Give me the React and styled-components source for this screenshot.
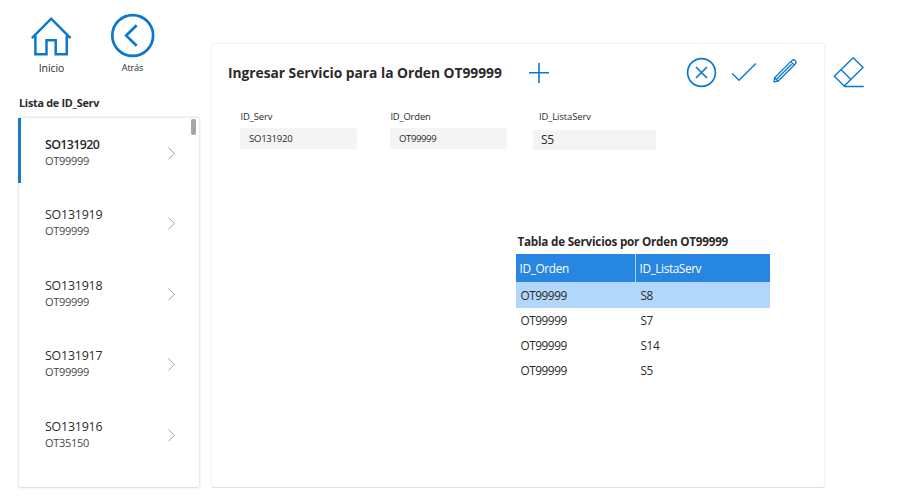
import React from "react";
import styled, { createGlobalStyle } from "styled-components";

const BLUE = "#0a78d0";

const GlobalStyle = createGlobalStyle`
  * { box-sizing: border-box; }
  body { margin: 0; background: #fff; }
`;

const Page = styled.div`
  display: flex;
  width: 912px;
  height: 500px;
  overflow: hidden;
  background: #fff;
  color: #2b2a29;
  font-family: "Open Sans", "Noto Sans", sans-serif;
`;

const Text = styled.span`
  display: block;
  white-space: nowrap;
  font-size: ${(p) => p.$size}px;
  line-height: ${(p) => p.$line || 16}px;
  font-weight: ${(p) => p.$weight || 400};
  letter-spacing: ${(p) => p.$track || 0}px;
  color: ${(p) => p.$color || "inherit"};
`;

const Sidebar = styled.aside`
  display: flex;
  flex-direction: column;
  width: 182px;
  margin-left: 18px;
`;

const Nav = styled.nav`
  display: flex;
  gap: 37px;
  height: 95px;
  padding: 13px 0 0 11px;
`;

const NavButton = styled.a`
  display: flex;
  flex-direction: column;
  align-items: center;
  width: 44px;
  padding-left: 1px;
  svg { display: block; height: 47px; overflow: visible; }
`;

const ListTitle = styled.h2`
  height: 22px;
  margin: 0;
  padding-left: 1px;
`;

const ListCard = styled.div`
  display: flex;
  height: 371px;
  border: 1px solid #ebebeb;
  border-bottom-color: #dedede;
  border-radius: 3px;
  box-shadow: 0 0 2px rgba(0, 0, 0, 0.14);
`;

const List = styled.ul`
  display: flex;
  flex-direction: column;
  flex: 1;
  gap: 5.4px;
  margin: 0 0 0 -1px;
  padding: 0;
  list-style: none;
`;

const ListRow = styled.li`
  display: flex;
  align-items: center;
  justify-content: space-between;
  height: 65px;
  padding: 5px 16px 0 ${(p) => (p.$selected ? 24 : 27)}px;
  border-left: ${(p) => (p.$selected ? "3px solid #1a7acb" : "0")};
  svg { display: block; }
`;

const RowText = styled.div`
  display: flex;
  flex-direction: column;
`;

const ScrollThumb = styled.div`
  width: 5px;
  height: 16px;
  margin: 1px 3px 0 0;
  border-radius: 2px;
  background: #a6a6a6;
`;

const Panel = styled.main`
  display: flex;
  flex-direction: column;
  width: 614px;
  height: 445px;
  margin: 43px 0 0 11px;
  border: 1px solid #f3f3f3;
  border-bottom-color: #dedede;
  border-radius: 3px;
  box-shadow: 0 0 1px rgba(0, 0, 0, 0.08);
`;

const PanelHeader = styled.header`
  display: flex;
  align-items: center;
  height: 57px;
  padding: 0 26px 0 16px;
`;

const TitleBox = styled.h1`
  width: 301px;
  margin: 0;
`;

const Actions = styled.div`
  display: flex;
  gap: 15px;
  margin-left: auto;
`;

const IconButton = styled.button`
  padding: 0;
  border: 0;
  background: none;
  svg { display: block; overflow: visible; }
`;

const Form = styled.div`
  display: flex;
  height: 130px;
  padding: 8px 0 0 28px;
`;

const Field = styled.div`
  width: ${(p) => p.$width}px;
`;

const FieldLabel = styled.label`
  display: block;
  height: ${(p) => (p.$wide ? 21 : 19)}px;
  padding-left: ${(p) => (p.$wide ? 6 : 0.4)}px;
`;

const Input = styled.div`
  display: flex;
  align-items: center;
  width: ${(p) => (p.$wide ? 123 : 117)}px;
  height: ${(p) => (p.$wide ? 20 : 21)}px;
  padding-left: ${(p) => (p.$wide ? 8 : 9)}px;
  border-radius: ${(p) => (p.$wide ? 0 : 2)}px;
  background: #f4f4f4;
`;

const TableSection = styled.section`
  width: 254px;
  margin-left: 304px;
`;

const Caption = styled.h2`
  height: 23px;
  margin: 0;
  padding: 2px 0 0 1.5px;
`;

const TableRow = styled.div`
  display: grid;
  grid-template-columns: 120px 134px;
  align-items: stretch;
  height: ${(p) => p.$height || 25}px;
  background: ${(p) => p.$bg || "transparent"};
`;

const Cell = styled.div`
  display: flex;
  align-items: center;
  padding-left: ${(p) => (p.$head ? 3.5 : 4.5)}px;
  padding-bottom: ${(p) => (p.$raised ? 1 : 0)}px;
  border-right: ${(p) => (p.$divider ? "1px solid #a9d0f5" : "0")};
`;

const EraserButton = styled(IconButton)`
  width: 32px;
  height: 32px;
  margin: 57px 0 0 8px;
`;

const HomeIcon = () => (
  <svg width="44" height="47" viewBox="0 0 44 47" fill="none" stroke={BLUE} strokeWidth="2.5">
    <path d="M1.9 25.2 21.2 5.7 40.5 25.2" />
    <path d="M5.4 22.5v18.8h11.1V27.3h9.2v14h11.1V22.5" />
  </svg>
);

const BackIcon = () => (
  <svg width="44" height="47" viewBox="0 0 44 47" fill="none" stroke={BLUE} strokeWidth="2.7">
    <circle cx="21.7" cy="22.5" r="20.4" />
    <path d="M25.7 12.3 15.2 22.6l10.5 10.2" />
  </svg>
);

const Chevron = () => (
  <svg width="8" height="14" viewBox="0 0 8 14" fill="none" stroke="#a0a0a0" strokeWidth="1">
    <path d="M1.3 1.4 7.3 7.4l-6 6" />
  </svg>
);

const PlusIcon = () => (
  <svg width="20" height="20" viewBox="0 0 20 20" stroke={BLUE} strokeWidth="1.6">
    <path d="M0 9.8h20M10 0v20" />
  </svg>
);

const CancelIcon = () => (
  <svg width="30" height="30" viewBox="0 0 30 30" fill="none" stroke={BLUE} strokeWidth="1.7">
    <circle cx="15.5" cy="14.5" r="13.9" />
    <path d="m10 9 11 11m0-11-11 11" />
  </svg>
);

const CheckIcon = () => (
  <svg width="26" height="30" viewBox="0 0 26 30" fill="none" stroke={BLUE} strokeWidth="1.4">
    <path d="m1.2 15.4 6.8 6.8L24.8 5.6" />
  </svg>
);

const PencilIcon = () => (
  <svg width="26" height="30" viewBox="0 0 26 30" fill="none" stroke={BLUE} strokeWidth="1.25" strokeLinejoin="round">
    <path d="M2.6 19.8 19.8 2.6a2.35 2.35 0 0 1 3.4 3.4L6 23.2l-4 .6z" />
    <path d="M4.6 21.3 19.6 6.3M18.8 3.6l3.4 3.4M2.6 19.8 6 23.2" />
  </svg>
);

const EraserIcon = () => (
  <svg width="32" height="32" viewBox="0 0 32 32" fill="none" stroke={BLUE} strokeWidth="1.4">
    <path d="M20.2.8 30 10.6 11.2 29.1 1.3 19.3zM8 12.6l9.9 9.9M11.2 29.5h19.5" />
  </svg>
);

const services = [
  ["SO131920", "OT99999"],
  ["SO131919", "OT99999"],
  ["SO131918", "OT99999"],
  ["SO131917", "OT99999"],
  ["SO131916", "OT35150"],
];

const tableRows = ["S8", "S7", "S14", "S5"];

export default function App() {
  return (
    <Page>
      <GlobalStyle />
      <Sidebar>
        <Nav>
          <NavButton>
            <HomeIcon />
            <Text $size={10.5} $track={-0.1}>Inicio</Text>
          </NavButton>
          <NavButton>
            <BackIcon />
            <Text $size={9.2} $track={-0.2}>Atrás</Text>
          </NavButton>
        </Nav>
        <ListTitle>
          <Text $size={10.8} $weight={700} $track={-0.25}>Lista de ID_Serv</Text>
        </ListTitle>
        <ListCard>
          <List>
            {services.map(([id, order], i) => (
              <ListRow key={id} $selected={i === 0}>
                <RowText>
                  <Text $size={12.4} $weight={i === 0 ? 600 : 400} $track={i === 0 ? -0.6 : -0.2}>{id}</Text>
                  <Text $size={11} $track={-0.3} $color="#484644">{order}</Text>
                </RowText>
                <Chevron />
              </ListRow>
            ))}
          </List>
          <ScrollThumb />
        </ListCard>
      </Sidebar>

      <Panel>
        <PanelHeader>
          <TitleBox>
            <Text $size={13.8} $line={20} $weight={700} $track={-0.03}>Ingresar Servicio para la Orden OT99999</Text>
          </TitleBox>
          <IconButton aria-label="Agregar"><PlusIcon /></IconButton>
          <Actions>
            <IconButton aria-label="Cancelar"><CancelIcon /></IconButton>
            <IconButton aria-label="Guardar"><CheckIcon /></IconButton>
            <IconButton aria-label="Editar"><PencilIcon /></IconButton>
          </Actions>
        </PanelHeader>

        <Form>
          <Field $width={150}>
            <FieldLabel><Text $size={9.4} $track={-0.08}>ID_Serv</Text></FieldLabel>
            <Input><Text $size={9.6} $track={-0.28}>SO131920</Text></Input>
          </Field>
          <Field $width={143}>
            <FieldLabel><Text $size={9.4} $track={-0.15}>ID_Orden</Text></FieldLabel>
            <Input><Text $size={9.6} $track={-0.42}>OT99999</Text></Input>
          </Field>
          <Field $width={123}>
            <FieldLabel $wide><Text $size={9.4} $track={-0.08}>ID_ListaServ</Text></FieldLabel>
            <Input $wide><Text $size={12} $track={-0.4}>S5</Text></Input>
          </Field>
        </Form>

        <TableSection>
          <Caption>
            <Text $size={11.7} $weight={700} $track={-0.23}>Tabla de Servicios por Orden OT99999</Text>
          </Caption>
          <TableRow $height={28} $bg="#2786df">
            <Cell $head $divider><Text $size={11.8} $track={-0.35} $color="#fff">ID_Orden</Text></Cell>
            <Cell $head><Text $size={11.8} $track={-0.4} $color="#fff">ID_ListaServ</Text></Cell>
          </TableRow>
          {tableRows.map((code, i) => (
            <TableRow key={code} $height={i === 0 ? 26 : 25} $bg={i === 0 ? "#b3d6fb" : undefined}>
              <Cell $raised={i > 0}><Text $size={11.8} $track={-0.45}>OT99999</Text></Cell>
              <Cell $raised={i > 0}><Text $size={11.8} $track={-0.35}>{code}</Text></Cell>
            </TableRow>
          ))}
        </TableSection>
      </Panel>

      <EraserButton aria-label="Borrar"><EraserIcon /></EraserButton>
    </Page>
  );
}
